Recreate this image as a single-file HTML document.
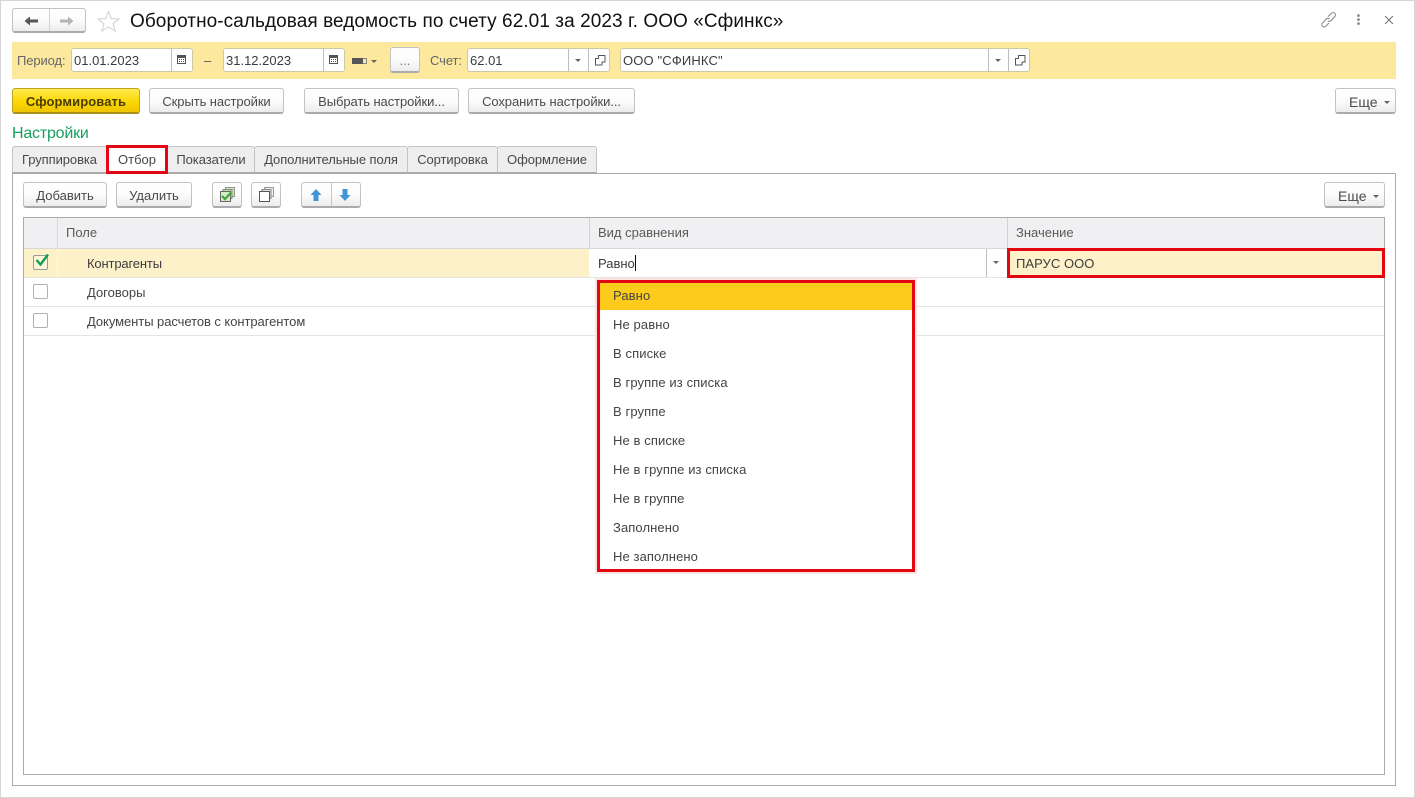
<!DOCTYPE html>
<html lang="ru"><head><meta charset="utf-8"><title>Оборотно-сальдовая ведомость</title>
<style>
*{box-sizing:border-box}
html,body{margin:0;padding:0;background:#fff}
#p{position:relative;width:1416px;height:798px;overflow:hidden;background:#fff;font:13px "Liberation Sans",Arial,sans-serif;color:#444;letter-spacing:0}
.a{position:absolute}
.t{position:absolute;white-space:nowrap;line-height:16px;height:16px}
.b{position:absolute;border:1px solid #c2c2c2;border-bottom:2px solid #ababab;border-radius:3px;background:linear-gradient(#fff,#fcfcfc 50%,#ececec);text-align:center;line-height:23px;white-space:nowrap;color:#4a4a4a;padding-top:1px}
.f{position:absolute;background:#fff;border:1px solid #cfc8a4;border-radius:3px;height:24px;line-height:22px;padding-left:2px;padding-top:1px;white-space:nowrap;color:#3c3c3c}
.s{position:absolute;top:0;bottom:0;width:1px;background:#bdbdbd}
.tab{position:absolute;top:146px;height:27px;background:#eeeeef;border:1px solid #c4c4c4;border-bottom:1px solid #aaa;border-radius:3px 3px 0 0;text-align:center;line-height:25px;white-space:nowrap;color:#484848;letter-spacing:-.08px}
.tri{position:absolute;width:0;height:0;border-left:3px solid transparent;border-right:3px solid transparent;border-top:3px solid #666}
.m{position:absolute;left:13px;white-space:nowrap;line-height:29px;height:29px;color:#444;letter-spacing:.1px}
.cb{position:absolute;left:33px;width:15px;height:15px;border:1px solid #b0b0b0;border-radius:2px;background:#fff}
svg{position:absolute;overflow:visible}
</style></head><body><div id="p">

<div class="a" style="left:0;top:0;width:1416px;height:798px;border:1px solid #d6d6d6;border-width:1px 2px 1px 1px"></div>

<div class="b" style="left:12px;top:8px;width:74px;height:25px"></div>
<div class="a" style="left:49px;top:9px;width:1px;height:22px;background:#d2d2d2"></div>
<svg style="left:24px;top:15px" width="16" height="12"><path d="M0.5 6L6 1.5V4.5H14V7.5H6V10.5Z" fill="#555"/></svg>
<svg style="left:59px;top:15px" width="16" height="12"><path d="M14.5 6L9 1.5V4.5H1V7.5H9V10.5Z" fill="#b4b4b4"/></svg>
<svg style="left:97px;top:10px" width="24" height="22"><path d="M11.5 1.5L14.3 8.6L22 9L16 13.8L18.2 21L11.5 17L4.8 21L7 13.8L1 9L8.7 8.6Z" fill="#fff" stroke="#d0d0d0" stroke-width="1"/></svg>
<div class="t" style="left:130px;top:11px;font-size:19px;line-height:21px;height:21px;color:#111;letter-spacing:.07px">Оборотно-сальдовая ведомость по счету 62.01 за 2023 г. ООО «Сфинкс»</div>

<svg style="left:1321px;top:12px" width="16" height="16" fill="none" stroke="#808080" stroke-width="1"><path d="M7 4.5L10.5 1.3a2.4 2.4 0 0 1 3.3 0a2.4 2.4 0 0 1 0 3.3L10 8.6a2.4 2.4 0 0 1-3.2.2"/><path d="M8.6 6.8a2.4 2.4 0 0 0-3.2.2L1.4 11a2.4 2.4 0 0 0 0 3.3a2.4 2.4 0 0 0 3.3 0L8 11"/></svg>
<svg style="left:1356px;top:14px" width="5" height="12"><circle cx="2.5" cy="1.6" r="1.3" fill="#808080"/><circle cx="2.5" cy="5.6" r="1.3" fill="#808080"/><circle cx="2.5" cy="9.6" r="1.3" fill="#808080"/></svg>
<svg style="left:1384px;top:15px" width="10" height="10" stroke="#707070" stroke-width="1"><path d="M1 1L9 9M9 1L1 9"/></svg>

<div class="a" style="left:12px;top:42px;width:1384px;height:37px;background:#fce99e"></div>
<div class="t" style="left:17px;top:53px;color:#666;letter-spacing:-.1px">Период:</div>
<div class="f" style="left:71px;top:48px;width:122px">01.01.2023<span class="s" style="left:99px"></span></div>
<svg style="left:177px;top:55px" width="9" height="9"><path d="M0.5 0.5H8.5V8.5H0.5Z" fill="#fff" stroke="#555"/><rect x="0.5" y="0.5" width="8" height="2.5" fill="#555"/><path d="M2 4h1v1H2zM4 4h1v1H4zM6 4h1v1H6zM2 6h1v1H2zM4 6h1v1H4zM6 6h1v1H6z" fill="#555"/></svg>
<div class="t" style="left:204px;top:53px;color:#555">–</div>
<div class="f" style="left:223px;top:48px;width:122px">31.12.2023<span class="s" style="left:99px"></span></div>
<svg style="left:329px;top:55px" width="9" height="9"><path d="M0.5 0.5H8.5V8.5H0.5Z" fill="#fff" stroke="#555"/><rect x="0.5" y="0.5" width="8" height="2.5" fill="#555"/><path d="M2 4h1v1H2zM4 4h1v1H4zM6 4h1v1H6zM2 6h1v1H2zM4 6h1v1H4zM6 6h1v1H6z" fill="#555"/></svg>
<div class="a" style="left:352px;top:58px;width:11px;height:6px;background:#555"></div>
<div class="a" style="left:363px;top:58px;width:4px;height:6px;border:1px solid #888;border-left:0"></div>
<div class="tri" style="left:371px;top:60px"></div>
<div class="b" style="left:390px;top:47px;width:30px;height:26px;color:#777;line-height:24px">...</div>
<div class="t" style="left:430px;top:53px;color:#666;letter-spacing:-.1px">Счет:</div>
<div class="f" style="left:467px;top:48px;width:143px">62.01<span class="s" style="left:100px"></span><span class="s" style="left:120px"></span></div>
<div class="tri" style="left:575px;top:59px"></div>
<svg style="left:595px;top:55px" width="11" height="11" fill="#fff" stroke="#555"><rect x="3.5" y="0.5" width="6.5" height="6.5"/><path d="M3.5 3.5H0.5V10H7V7"/></svg>
<div class="f" style="left:620px;top:48px;width:410px;letter-spacing:.15px">ООО "СФИНКС"<span class="s" style="left:367px"></span><span class="s" style="left:387px"></span></div>
<div class="tri" style="left:995px;top:59px"></div>
<svg style="left:1015px;top:55px" width="11" height="11" fill="#fff" stroke="#555"><rect x="3.5" y="0.5" width="6.5" height="6.5"/><path d="M3.5 3.5H0.5V10H7V7"/></svg>

<div class="b" style="left:12px;top:88px;width:128px;height:26px;background:linear-gradient(#fee94f,#fbd600 60%,#eec400);border-color:#bfa520;border-bottom-color:#a8901a;color:#4a3d00;font-weight:bold;letter-spacing:.1px;line-height:24px">Сформировать</div>
<div class="b" style="left:149px;top:88px;width:135px;height:26px;line-height:24px;letter-spacing:-.08px">Скрыть настройки</div>
<div class="b" style="left:304px;top:88px;width:155px;height:26px;line-height:24px;letter-spacing:-.08px">Выбрать настройки...</div>
<div class="b" style="left:468px;top:88px;width:167px;height:26px;line-height:24px;letter-spacing:-.08px">Сохранить настройки...</div>
<div class="b" style="left:1335px;top:88px;width:61px;height:26px;line-height:24px;text-align:left;padding-left:13px;font-size:14px">Еще</div>
<div class="tri" style="left:1384px;top:101px"></div>

<div class="t" style="left:12px;top:125px;font-size:16px;line-height:18px;height:18px;color:#16a05c;letter-spacing:-.2px">Настройки</div>

<div class="a" style="left:12px;top:173px;width:1384px;height:613px;border:1px solid #aaa"></div>
<div class="tab" style="left:12px;width:95px">Группировка</div>
<div class="tab" style="left:167px;width:88px">Показатели</div>
<div class="tab" style="left:254px;width:154px">Дополнительные поля</div>
<div class="tab" style="left:407px;width:91px">Сортировка</div>
<div class="tab" style="left:497px;width:100px">Оформление</div>
<div class="a" style="left:106px;top:145px;width:62px;height:29px;background:#fff;border:3px solid #e30613;text-align:center;line-height:24px;color:#484848">Отбор</div>

<div class="b" style="left:23px;top:182px;width:84px;height:26px;line-height:24px">Добавить</div>
<div class="b" style="left:116px;top:182px;width:76px;height:26px;line-height:24px">Удалить</div>
<div class="b" style="left:212px;top:182px;width:30px;height:26px"></div>
<svg style="left:220px;top:187px" width="15" height="15"><path d="M5.5 3V0.5H14.5V9.5H12" fill="#cfe3c2" stroke="#8f9a8a"/><path d="M3 5V2.5H12V11.5H10" fill="#bcd9ab" stroke="#7f8f7a"/><rect x="0.5" y="4.5" width="10" height="10" fill="#d6ecc8" stroke="#666"/><path d="M2 9L5 12L11 5.5" fill="none" stroke="#3fa63a" stroke-width="2.2"/></svg>
<div class="b" style="left:251px;top:182px;width:30px;height:26px"></div>
<svg style="left:259px;top:187px" width="15" height="15"><path d="M5.5 3V0.5H14.5V9.5H12" fill="#eee" stroke="#999"/><path d="M3 5V2.5H12V11.5H10" fill="#e4e4e4" stroke="#888"/><rect x="0.5" y="4.5" width="10" height="10" fill="#fff" stroke="#555"/></svg>
<div class="b" style="left:301px;top:182px;width:60px;height:26px"></div>
<div class="a" style="left:331px;top:183px;width:1px;height:23px;background:#c8c8c8"></div>
<svg style="left:310px;top:188px" width="12" height="14"><path d="M6 1L11.5 7H8.5V13H3.5V7H0.5Z" fill="#3f96d6"/></svg>
<svg style="left:339px;top:188px" width="12" height="14"><path d="M6 13L11.5 7H8.5V1H3.5V7H0.5Z" fill="#3f96d6"/></svg>
<div class="b" style="left:1324px;top:182px;width:61px;height:26px;line-height:24px;text-align:left;padding-left:13px;font-size:14px">Еще</div>
<div class="tri" style="left:1373px;top:195px"></div>

<div class="a" style="left:23px;top:217px;width:1362px;height:558px;border:1px solid #aaa"></div>
<div class="a" style="left:24px;top:218px;width:1360px;height:30px;background:#f0f0f2"></div>
<div class="a" style="left:57px;top:218px;width:1px;height:30px;background:#d9d9d9"></div>
<div class="a" style="left:589px;top:218px;width:1px;height:30px;background:#d2d2d2"></div>
<div class="a" style="left:1007px;top:218px;width:1px;height:30px;background:#d2d2d2"></div>
<div class="a" style="left:24px;top:248px;width:1360px;height:1px;background:#d8d8d8"></div>
<div class="t" style="left:66px;top:225px;color:#5a5a5a">Поле</div>
<div class="t" style="left:598px;top:225px;color:#5a5a5a">Вид сравнения</div>
<div class="t" style="left:1016px;top:225px;color:#5a5a5a">Значение</div>

<div class="a" style="left:24px;top:249px;width:565px;height:28px;background:#fdf1ca"></div>
<div class="a" style="left:57px;top:249px;width:1px;height:28px;background:#fff8e2"></div>
<div class="a" style="left:24px;top:277px;width:1360px;height:1px;background:#e4e4e4"></div>
<div class="a" style="left:24px;top:306px;width:1360px;height:1px;background:#e4e4e4"></div>
<div class="a" style="left:24px;top:335px;width:1360px;height:1px;background:#e4e4e4"></div>

<div class="cb" style="top:255px;background:#fdf6dd;border-color:#999"></div>
<svg style="left:35px;top:253px" width="15" height="14"><path d="M1.5 7L5.5 11.5L13 1.5" fill="none" stroke="#10a050" stroke-width="2.4"/></svg>
<div class="cb" style="top:284px"></div>
<div class="cb" style="top:313px"></div>
<div class="t" style="left:87px;top:256px;color:#3c3c3c;letter-spacing:-.15px">Контрагенты</div>
<div class="t" style="left:87px;top:285px">Договоры</div>
<div class="t" style="left:87px;top:314px;letter-spacing:-.06px">Документы расчетов с контрагентом</div>

<div class="t" style="left:598px;top:256px;color:#3c3c3c">Равно</div>
<div class="a" style="left:635px;top:255px;width:1px;height:16px;background:#111"></div>
<div class="a" style="left:986px;top:249px;width:1px;height:28px;background:#bdbdbd"></div>
<div class="tri" style="left:993px;top:261px"></div>
<div class="a" style="left:1007px;top:248px;width:378px;height:30px;background:#fdf1ca;border:3px solid #e30613"></div>
<div class="t" style="left:1016px;top:256px;color:#3c3c3c;letter-spacing:.05px">ПАРУС ООО</div>

<div class="a" style="left:595px;top:278px;width:322px;height:296px;background:#fbe3df"></div>
<div class="a" style="left:597px;top:280px;width:318px;height:292px;background:#fff;border:3px solid #e30613">
<div class="a" style="left:0;top:0;width:312px;height:27px;background:#fccb1c"></div>
<div class="m" style="top:-2px">Равно</div>
<div class="m" style="top:27px">Не равно</div>
<div class="m" style="top:56px">В списке</div>
<div class="m" style="top:85px">В группе из списка</div>
<div class="m" style="top:114px">В группе</div>
<div class="m" style="top:143px">Не в списке</div>
<div class="m" style="top:172px">Не в группе из списка</div>
<div class="m" style="top:201px">Не в группе</div>
<div class="m" style="top:230px">Заполнено</div>
<div class="m" style="top:259px">Не заполнено</div>
</div>

</div></body></html>
